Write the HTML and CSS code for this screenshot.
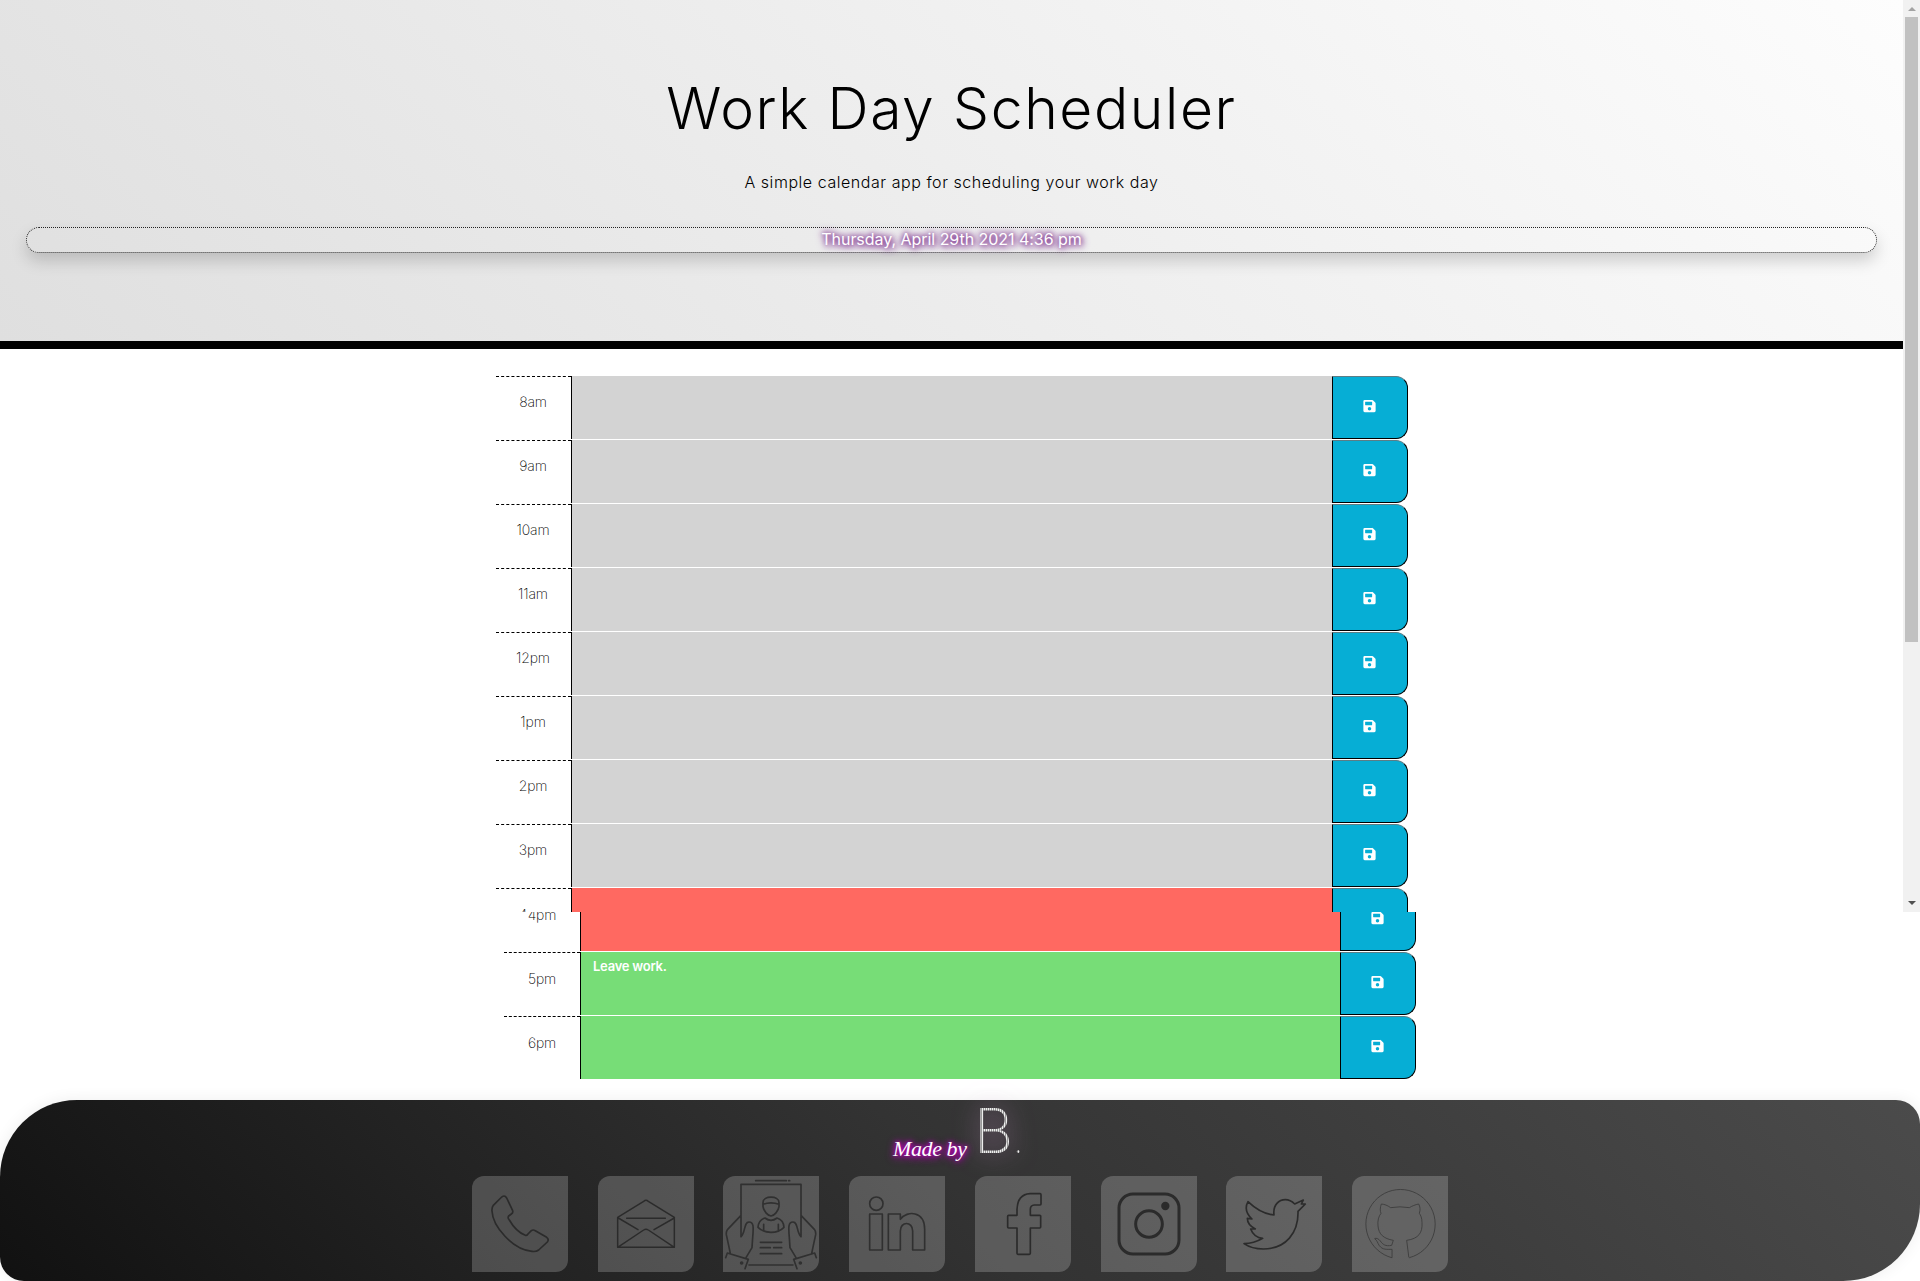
FILE: index.html
```
<!DOCTYPE html>
<html lang="en">
<head>
<meta charset="utf-8">
<title>Work Day Scheduler</title>
<link rel="stylesheet" href="styles.css">
</head>
<body>
<svg class="defs" aria-hidden="true">
  <symbol id="save" viewBox="0 0 448 512"><path fill-rule="evenodd" d="M434 130 350 46a48 48 0 0 0-34-14H48A48 48 0 0 0 0 80v352a48 48 0 0 0 48 48h352a48 48 0 0 0 48-48V164a48 48 0 0 0-14-34ZM224 416a64 64 0 1 1 0-128 64 64 0 0 1 0 128Zm96-305v101a12 12 0 0 1-12 12H76a12 12 0 0 1-12-12V108a12 12 0 0 1 12-12h229l15 15Z"/></symbol>
</svg>
<div class="window">
  <div class="page">
    <header class="hero">
      <h1><span>Work Day Scheduler</span></h1>
      <p class="lead"><span>A simple calendar app for scheduling your work day</span></p>
      <p class="today"><span>Thursday, April 29th 2021 4:36 pm</span></p>
    </header>
    <main class="schedule">
      <div class="row"><div class="hour">8am</div><div class="task past"></div><button class="save"><svg><use href="#save"/></svg></button></div>
      <div class="row"><div class="hour">9am</div><div class="task past"></div><button class="save"><svg><use href="#save"/></svg></button></div>
      <div class="row"><div class="hour">10am</div><div class="task past"></div><button class="save"><svg><use href="#save"/></svg></button></div>
      <div class="row"><div class="hour">11am</div><div class="task past"></div><button class="save"><svg><use href="#save"/></svg></button></div>
      <div class="row"><div class="hour">12pm</div><div class="task past"></div><button class="save"><svg><use href="#save"/></svg></button></div>
      <div class="row"><div class="hour">1pm</div><div class="task past"></div><button class="save"><svg><use href="#save"/></svg></button></div>
      <div class="row"><div class="hour">2pm</div><div class="task past"></div><button class="save"><svg><use href="#save"/></svg></button></div>
      <div class="row"><div class="hour">3pm</div><div class="task past"></div><button class="save"><svg><use href="#save"/></svg></button></div>
      <div class="row"><div class="hour cut">4pm</div><div class="task present"></div><button class="save"></button></div>
    </main>
  </div>
  <div class="scrollbar"><i class="up"></i><i class="thumb"></i><i class="down"></i></div>
</div>
<section class="rest">
  <div class="row"><div class="hour">4pm</div><div class="task present"></div><button class="save"><svg><use href="#save"/></svg></button></div>
  <div class="row"><div class="hour">5pm</div><div class="task future">Leave work.</div><button class="save"><svg><use href="#save"/></svg></button></div>
  <div class="row"><div class="hour">6pm</div><div class="task future"></div><button class="save"><svg><use href="#save"/></svg></button></div>
</section>
<footer class="footer">
  <div class="credit"><span class="made">Made by</span><span class="brand">B<small>.</small></span></div>
  <nav class="links">
    <a><svg viewBox="0 0 288 288"><path d="M86 66Q97 54 104 66L122 104Q124 110 118 114L110 120Q106 126 112 132C125 155 140 170 160 178Q164 180 168 174L178 164Q183 160 190 164L224 184Q232 190 226 198L200 222Q192 228 180 226C120 220 62 150 60 105Q59 95 64 88Z"/></svg></a>
    <a><svg viewBox="0 0 288 288" class="fine"><path d="M59 124 137 76Q144 70 151 76L229 124V214H59ZM86 127H202M61 126 120 161M229 126 168 161M59 214 137 162Q144 157 151 162L229 214"/></svg></a>
    <a><svg viewBox="0 0 288 288" class="mid"><path d="M98 14H190M197 14H200M54 182V25H234V182M54 118 14 160Q9 166 10 176L22 232M54 182C68 170 62 138 78 138 92 138 92 152 89 185L87 215 69 245M8 245 13 231 76 250 66 278M234 118 274 160Q279 166 278 176L266 232M234 182C220 170 226 138 210 138 196 138 196 152 199 185L201 215 219 245M280 245 275 231 212 250 222 278M78 267H210M120 80C120 58 168 58 168 80V92C166 105 154 119 144 120 134 119 122 105 120 92ZM120 85Q144 76 168 85M126 126C112 130 106 140 105 154 125 174 163 174 183 154 182 140 176 130 162 126Q144 140 126 126ZM122 145V162M166 145V162M112 199H176M112 215H142M152 215H176M112 233H176"/><circle cx="56" cy="261" r="3"/><circle cx="232" cy="261" r="3"/></svg></a>
    <a><svg viewBox="0 0 288 288" class="mid"><circle cx="82" cy="83" r="20"/><path d="M62 114H100V222H62ZM118 114H154V130C175 102 227 105 227 160V222H191V165C191 135 154 135 154 165V222H118Z"/></svg></a>
    <a><svg viewBox="0 0 288 288"><path d="M195 53Q198 53 198 56V84Q198 87 195 87H178Q166 88 166 100V118H194Q198 118 197 122V153Q197 156 194 156H166V232Q166 235 163 235H129Q126 235 126 232V156H101Q98 156 98 153V121Q98 118 101 118H126V100Q128 55 165 53Z"/></svg></a>
    <a><svg viewBox="0 0 288 288" class="bold"><rect x="54" y="54" width="180" height="180" rx="42"/><circle cx="144" cy="144" r="40"/><circle class="dot" cx="193" cy="90" r="8"/></svg></a>
    <a><svg viewBox="0 0 288 288"><path d="M54 203C78 203 95 196 110 187 90 185 80 175 74 159L88 159C70 150 64 140 64 127L78 129C60 112 56 95 66 77 90 100 115 115 144 117 140 85 160 71 178 71 190 71 198 76 206 84L232 72 226 84 238 84 216 106C218 170 180 219 112 219 90 219 70 214 54 203Z"/></svg></a>
    <a><svg viewBox="0 0 288 288" class="hair"><path d="M119 245A104 104 0 1 1 172 245Q170 245 170 240L164 193C200 188 212 170 210 140 210 125 206 118 202 112 206 100 204 92 200 84 190 86 180 90 172 95Q144 90 116 95C106 88 98 85 88 84 84 95 84 105 87 112 80 120 76 135 78 150 80 175 95 188 124 193L119 208C100 212 92 205 85 195 80 188 72 185 68 188 76 194 76 200 82 209 92 222 104 220 119 220Z"/></svg></a>
  </nav>
</footer>
</body>
</html>
```
FILE: styles.css
```
* { box-sizing: border-box; }
body {
  margin: 0;
  width: 1920px;
  height: 1281px;
  overflow: hidden;
  background: #fff;
  color: #000;
  font-family: Inter, "Open Sans", sans-serif;
  font-weight: 300;
}
.defs { display: none; }

.window { display: flex; height: 912px; overflow: hidden; }
.page { width: 1903px; }

.hero {
  height: 349px;
  padding: 75px 26px 0;
  border-bottom: 8px solid #000;
  background: linear-gradient(45deg, #dfdfdf, #fdfdfd);
  text-align: center;
}
.hero h1 {
  margin: 0;
  font-size: 57px;
  font-weight: 300;
  line-height: 68px;
  letter-spacing: 1.6px;
}
.hero p { margin: 0; font-size: 16px; line-height: 24px; }
.hero .lead { margin-top: 27px; letter-spacing: .55px; }
.hero .today {
  height: 26px;
  margin-top: 33px;
  border: 1px dotted #222;
  border-radius: 13px;
  box-shadow: 0 8px 16px rgba(0, 0, 0, .17);
  color: #fff;
  font-weight: 400;
  line-height: 23px;
  letter-spacing: -.04px;
  text-shadow: 0 0 5px #7a2a8a, 0 0 8px #7a2a8a, 2px 2px 6px #8a4a9a;
}

.schedule { width: 912px; margin: 27px auto 0; }
.schedule, .rest { display: flex; flex-direction: column; align-items: center; }
.row { display: flex; flex: none; width: 912px; height: 64px; }
.hour {
  width: 75px;
  height: 63px;
  border-top: 1px dashed #000;
  padding-top: 15px;
  font-size: 14px;
  font-weight: 250;
  line-height: 20px;
  letter-spacing: -.15px;
  text-align: center;
}
.rest .hour, .hour.cut { padding-top: 16px; }
.task {
  width: 761px;
  height: 63px;
  border-left: 1px solid #000;
  padding: 7px 12px;
  color: #fff;
  font-size: 13px;
  font-weight: 600;
  line-height: 15px;
  letter-spacing: -.25px;
}
.rest .hour { width: 76px; }
.rest .task { width: 760px; }
.past { background: #d3d3d3; }
.present { background: #ff6961; }
.future { background: #77dd77; }
.save {
  display: flex;
  align-items: center;
  justify-content: center;
  width: 76px;
  height: 63px;
  padding: 0 1px 4px 0;
  border: 1px solid #000;
  border-top-color: #5c7d86;
  border-radius: 0 12px 12px 0;
  background: #06aed5;
}
.save svg { width: 13px; height: 14px; fill: #fff; }

.scrollbar {
  display: flex;
  flex-direction: column;
  align-items: center;
  width: 17px;
  background: #f1f1f1;
}
.scrollbar i { flex: none; }
.up { margin-top: 7px; border: solid transparent; border-width: 0 4px 4px; border-bottom-color: #a3a3a3; }
.thumb { width: 13px; height: 625px; margin-top: 6px; background: #c1c1c1; }
.down { margin-top: 259px; border: solid transparent; border-width: 4px 4px 0; border-top-color: #505050; }

.rest { height: 168px; overflow: hidden; justify-content: flex-end; }

.footer {
  height: 181px;
  margin-top: 20px;
  border-radius: 77px 24px 77px 24px;
  background: linear-gradient(45deg, #111, #333 50%, #4b4b4b);
  box-shadow: 0 0 16px rgba(0, 0, 0, .07);
}
.credit {
  display: flex;
  align-items: flex-end;
  gap: 10px;
  height: 76px;
  padding: 0 0 0 893px;
  color: #fff;
}
.made {
  width: 75px;
  padding-bottom: 13px;
  font: italic 400 22px/28px "Liberation Serif", serif;
  letter-spacing: -.4px;
  white-space: nowrap;
  text-shadow: 0 0 4px #c0c, 0 0 8px #a0a, 0 2px 9px #a0a;
}
.brand {
  height: 76px;
  margin-left: -4px;
  font-size: 61px;
  font-weight: 200;
  line-height: 62px;
  color: transparent;
  background: repeating-linear-gradient(90deg, #eee 0 1px, #999 1px 2px);
  -webkit-background-clip: text;
  background-clip: text;
  filter: drop-shadow(0 0 12px rgba(221, 160, 221, .7));
}
.brand small { font-size: 36px; }
.links {
  display: flex;
  justify-content: space-between;
  width: 976px;
  margin: 0 auto;
}
.links a {
  width: 96px;
  height: 96px;
  border-radius: 12px 0;
  background: rgba(255, 255, 255, .2);
}
.links svg {
  display: block;
  width: 96px;
  height: 96px;
  fill: none;
  stroke: #2b2b2b;
  stroke-width: 5;
  stroke-linejoin: round;
  stroke-linecap: round;
}
.links .fine { stroke-width: 4.5; }
.links .mid { stroke-width: 5; stroke: #303030; }
.links .bold { stroke-width: 9; }
.links .dot { fill: #2b2b2b; }
.links .hair { stroke-width: 2.5; stroke: #3a3a3a; }
```
